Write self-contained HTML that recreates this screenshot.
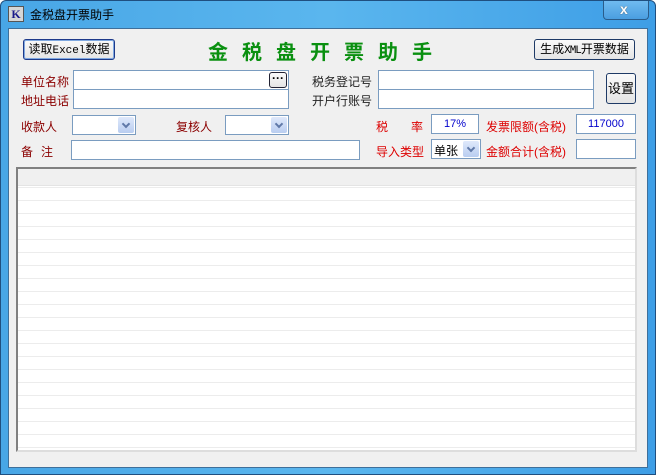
<!DOCTYPE html>
<html><head><meta charset="utf-8"><style>
*{box-sizing:border-box;margin:0;padding:0}
body{width:656px;height:475px;overflow:hidden;background:#fff;font-family:"Liberation Sans","Noto Sans CJK SC","WenQuanYi Zen Hei",sans-serif;font-size:12px;position:relative}
.win{position:absolute;left:0;top:0;width:656px;height:475px;border-radius:6px 6px 0 0;background:linear-gradient(90deg,#48a6e6 0,#5ab6ee 50%,#3e9ee6 100%);border:1px solid #1f4f80}
.client{position:absolute;left:8px;top:28px;width:640px;height:440px;background:#f0f0f0;border:1px solid #3e6f9a}
.t{position:absolute;white-space:nowrap}
.red{color:#d00}
.dred{color:#8b0000}
.in{position:absolute;background:#fff;border:1px solid #7a9cc0}
.btn{position:absolute;border:1px solid #1e3a66;border-radius:3px;background:linear-gradient(#fafafa,#e4e4e4);text-align:center;font-size:12px;color:#000}
.combo{position:absolute;background:#fff;border:1px solid #7a9cc0}
.combo i{position:absolute;right:1px;top:1px;width:16px;bottom:1px;background:linear-gradient(#dfe9fb,#b9cdf0);border-radius:2px}
.combo i:after{content:"";position:absolute;left:5px;top:4px;width:4px;height:4px;border-right:2px solid #6079a8;border-bottom:2px solid #6079a8;transform:rotate(45deg)}
.grid{position:absolute;left:16px;top:167px;width:621px;height:285px;border:2px solid #808080;border-right-color:#ddd;border-bottom-color:#ddd;background:repeating-linear-gradient(180deg,#fff 0,#fff 12px,#ececec 12px,#ececec 13px);background-position:0 6px}
.grid .hd{position:absolute;left:0;top:0;right:0;height:17px;background:#f0f0f0;border-bottom:1px solid #e4e4e4}
</style></head><body>
<div class="win">
  <div style="position:absolute;left:7px;top:5px;width:16px;height:16px;background:#d6d6d6;border:1px solid #555;font:bold 12px 'Liberation Serif',serif;color:#1a1a8a;text-align:center;line-height:14px">K</div>
  <div class="t" style="left:29px;top:5px;font-size:12px;color:#000">金税盘开票助手</div>
  <div style="position:absolute;left:602px;top:0;width:46px;height:19px;border:1px solid #2a5c8a;border-top:none;border-radius:0 0 4px 4px;background:linear-gradient(#70bbf0,#4a9ee0)"></div>
  <div class="t" style="left:619px;top:0;font:bold 14px 'Liberation Sans',sans-serif;color:#fff;text-shadow:0 0 1px #333">x</div>
</div>
<div class="client"></div>

<div class="btn" style="left:23px;top:39px;width:92px;height:21px;line-height:19px;border-color:#1e3a8a;box-shadow:inset 0 0 0 1px #7fa8e0">读取<span style="font-family:'Liberation Mono',monospace;font-size:11px">Excel</span>数据</div>
<div class="t" style="left:208px;top:36px;font-size:20px;font-weight:bold;color:#0a9010;letter-spacing:14px">金税盘开票助手</div>
<div class="btn" style="left:534px;top:39px;width:101px;height:21px;line-height:19px">生成<span style="font-family:'Liberation Mono',monospace;font-size:11px;letter-spacing:-1px">XML</span>开票数据</div>

<div class="t dred" style="left:21px;top:73px">单位名称</div>
<div class="t dred" style="left:21px;top:92px">地址电话</div>
<div class="in" style="left:73px;top:70px;width:216px;height:20px"></div>
<div class="in" style="left:73px;top:89px;width:216px;height:20px"></div>
<div class="btn" style="left:269px;top:72px;width:18px;height:16px;line-height:10px;font-weight:bold;border-color:#223">···</div>

<div class="t" style="left:312px;top:73px;color:#222">税务登记号</div>
<div class="t" style="left:312px;top:92px;color:#222">开户行账号</div>
<div class="in" style="left:378px;top:70px;width:216px;height:20px"></div>
<div class="in" style="left:378px;top:89px;width:216px;height:20px"></div>
<div class="btn" style="left:606px;top:73px;width:30px;height:31px;line-height:29px;font-size:13px">设置</div>

<div class="t dred" style="left:21px;top:118px">收款人</div>
<div class="combo" style="left:72px;top:115px;width:64px;height:20px"><i></i></div>
<div class="t dred" style="left:176px;top:118px">复核人</div>
<div class="combo" style="left:225px;top:115px;width:64px;height:20px"><i></i></div>

<div class="t red" style="left:376px;top:118px">税</div>
<div class="t red" style="left:411px;top:118px">率</div>
<div class="in" style="left:431px;top:114px;width:48px;height:20px;text-align:center;color:#00c;line-height:18px;font-size:11px">17%</div>
<div class="t red" style="left:486px;top:118px">发票限额(含税)</div>
<div class="in" style="left:576px;top:114px;width:60px;height:20px;text-align:center;color:#00c;line-height:18px;font-size:11px">117000</div>

<div class="t dred" style="left:21px;top:143px;letter-spacing:8px">备注</div>
<div class="in" style="left:71px;top:140px;width:289px;height:20px"></div>
<div class="t red" style="left:376px;top:143px">导入类型</div>
<div class="combo" style="left:431px;top:139px;width:50px;height:20px"><span style="position:absolute;left:2px;top:2px;color:#000">单张</span><i></i></div>
<div class="t red" style="left:486px;top:143px">金额合计(含税)</div>
<div class="in" style="left:576px;top:139px;width:60px;height:20px"></div>

<div class="grid"><div class="hd"></div></div>
</body></html>
